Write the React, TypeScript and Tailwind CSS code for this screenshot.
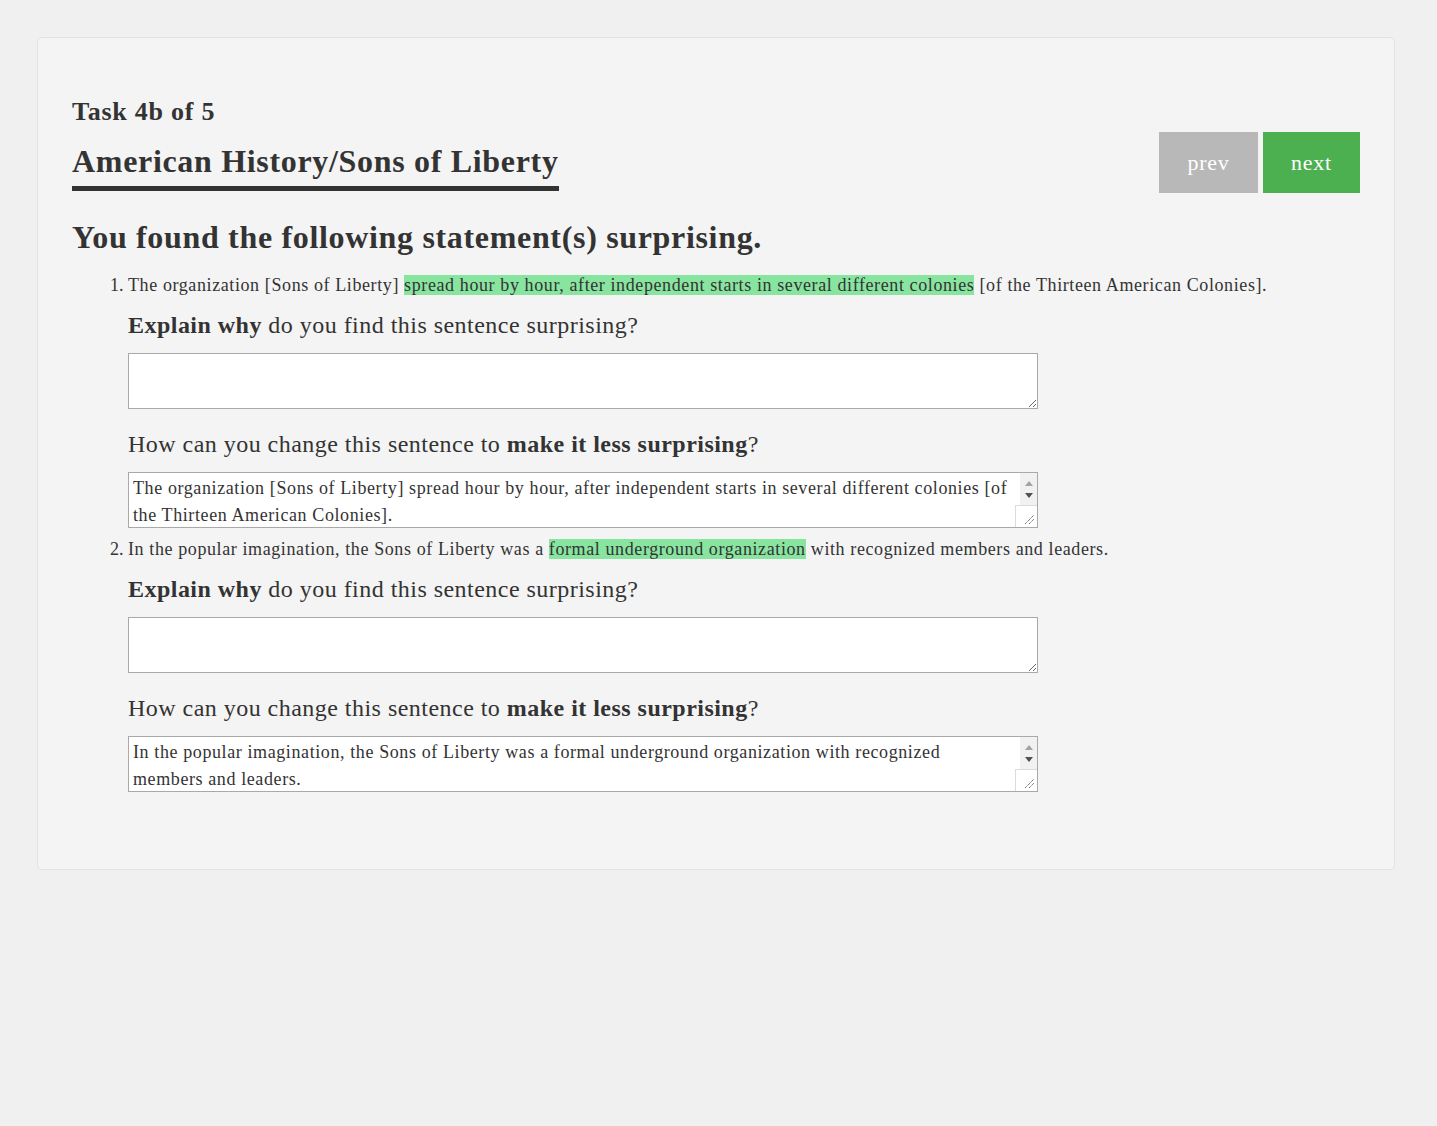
import React from "react";

interface Statement {
  before: string;
  highlight: string;
  after: string;
  rewrite: string;
}

const statements: Statement[] = [
  {
    before: "The organization [Sons of Liberty] ",
    highlight: "spread hour by hour, after independent starts in several different colonies",
    after: " [of the Thirteen American Colonies].",
    rewrite:
      "The organization [Sons of Liberty] spread hour by hour, after independent starts in several different colonies [of the Thirteen American Colonies].",
  },
  {
    before: "In the popular imagination, the Sons of Liberty was a ",
    highlight: "formal underground organization",
    after: " with recognized members and leaders.",
    rewrite:
      "In the popular imagination, the Sons of Liberty was a formal underground organization with recognized members and leaders.",
  },
];

// classic scrollbar + resize corner drawn over the filled textarea
const FakeScrollbar = () => (
  <>
    <div className="pointer-events-none absolute right-[1px] top-[1px] flex h-[32px] w-[17px] flex-col items-center justify-center gap-[7px] bg-[#f1f1f1]">
      <svg width="8" height="5" viewBox="0 0 8 5">
        <path d="M0 5 L4 0 L8 5 Z" fill="#a3a3a3" />
      </svg>
      <svg width="8" height="5" viewBox="0 0 8 5">
        <path d="M0 0 L4 5 L8 0 Z" fill="#505050" />
      </svg>
    </div>
    <div className="pointer-events-none absolute bottom-[1px] right-[1px] h-[22px] w-[22px] border-l border-t border-[#dcdcdc] bg-white">
      <svg className="absolute bottom-[2px] right-[2px]" width="11" height="11" viewBox="0 0 11 11">
        <path d="M1 10 L10 1 M5 10 L10 5" stroke="#6b6b6b" strokeWidth="1" strokeDasharray="1.4 0.6" />
      </svg>
    </div>
  </>
);

const StatementItem = ({ item }: { item: Statement }) => {
  return (
    <li>
      <div className="text-[18px] leading-[21px] tracking-[0.6px]">
        {item.before}
        <span className="bg-[#88e5a0]">{item.highlight}</span>
        {item.after}
      </div>
      <p className="mt-[15px] mb-[14px] text-[24px] leading-[28px] tracking-[0.47px]">
        <b>Explain why</b> do you find this sentence surprising?
      </p>
      <textarea
        className="block h-[56px] w-[910px] border border-[#a9a9a9] bg-white px-[4px] py-[2px] text-[18px] leading-[27px] tracking-[0.6px] text-[#333] outline-none"
        defaultValue=""
      />
      <p className="mt-[21px] mb-[14px] text-[24px] leading-[28px] tracking-[0.47px]">
        How can you change this sentence to <b>make it less surprising</b>?
      </p>
      <div className="relative mb-[8px] w-[910px]">
        <textarea
          className="block h-[56px] w-[910px] resize-none overflow-hidden border border-[#a9a9a9] bg-white py-[2px] pl-[4px] pr-[24px] text-[18px] leading-[27px] tracking-[0.6px] text-[#333] outline-none"
          defaultValue={item.rewrite}
        />
        <FakeScrollbar />
      </div>
    </li>
  );
};

export default function App() {
  return (
    <div
      className="min-h-screen bg-[#f0f0f0] pt-[37px] text-[#333]"
      style={{ fontFamily: '"Liberation Serif", "Times New Roman", serif' }}
    >
      <div className="ml-[37px] w-[1358px] rounded-[5px] border border-[#e3e3e3] bg-[#f4f4f4] px-[34px] pt-[59px] pb-[69px]">
        <div className="flex items-end justify-between">
          <div>
            <div className="text-[26px] font-bold leading-[30px] tracking-[0.75px]">Task 4b of 5</div>
            <h2 className="mt-[16px] inline-block border-b-[5px] border-[#333] pb-[6px] text-[32px] font-bold leading-[37px] tracking-[0.68px]">
              American History/Sons of Liberty
            </h2>
          </div>
          <div className="mb-[-2px] flex gap-[5px]">
            <button className="h-[61px] w-[99px] bg-[#b8b8b8] text-[22px] tracking-[0.75px] text-white">
              prev
            </button>
            <button className="h-[61px] w-[97px] bg-[#4caf50] text-[22px] tracking-[0.75px] text-white">
              next
            </button>
          </div>
        </div>

        <h1 className="mt-[28px] text-[32px] font-bold leading-[37px] tracking-[0.67px]">
          You found the following statement(s) surprising.
        </h1>

        <ol className="mt-[16px] list-decimal pl-[56px] text-[18px]">
          {statements.map((s, i) => (
            <StatementItem key={i} item={s} />
          ))}
        </ol>
      </div>
    </div>
  );
}
